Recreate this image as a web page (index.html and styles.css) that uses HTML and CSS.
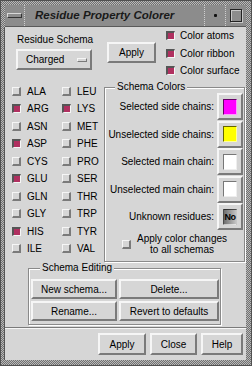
FILE: index.html
```html
<!DOCTYPE html>
<html lang="en">
<head>
    <meta charset="UTF-8">
    <title>Residue Property Colorer</title>
    <link rel="stylesheet" href="styles.css">
</head>
<body>
    <div class="window">
        <div class="titlebar">
            <div class="tb-menu"><span class="menu-bar"></span></div>
            <div class="tb-title">Residue Property Colorer</div>
            <div class="tb-min"><span class="min-dot"></span></div>
            <div class="tb-max"><span class="max-box"></span></div>
        </div>
        <div class="content">
            <div class="top">
                <div class="schema-col">
                    <div class="schema-label">Residue Schema</div>
                    <div class="option">Charged<span class="opt-ind"></span></div>
                </div>
                <button class="btn apply-top">Apply</button>
                <div class="toggles">
                    <div class="toggle"><span class="check on"></span>Color atoms</div>
                    <div class="toggle"><span class="check on"></span>Color ribbon</div>
                    <div class="toggle"><span class="check on"></span>Color surface</div>
                </div>
            </div>

            <div class="middle">
                <div class="residues">
                    <div class="residue"><span class="check"></span>ALA</div>
                    <div class="residue"><span class="check on"></span>ARG</div>
                    <div class="residue"><span class="check"></span>ASN</div>
                    <div class="residue"><span class="check on"></span>ASP</div>
                    <div class="residue"><span class="check"></span>CYS</div>
                    <div class="residue"><span class="check on"></span>GLU</div>
                    <div class="residue"><span class="check"></span>GLN</div>
                    <div class="residue"><span class="check"></span>GLY</div>
                    <div class="residue"><span class="check on"></span>HIS</div>
                    <div class="residue"><span class="check"></span>ILE</div>
                    <div class="residue"><span class="check"></span>LEU</div>
                    <div class="residue"><span class="check on"></span>LYS</div>
                    <div class="residue"><span class="check"></span>MET</div>
                    <div class="residue"><span class="check"></span>PHE</div>
                    <div class="residue"><span class="check"></span>PRO</div>
                    <div class="residue"><span class="check"></span>SER</div>
                    <div class="residue"><span class="check"></span>THR</div>
                    <div class="residue"><span class="check"></span>TRP</div>
                    <div class="residue"><span class="check"></span>TYR</div>
                    <div class="residue"><span class="check"></span>VAL</div>
                </div>

                <fieldset class="group colors">
                    <legend>Schema Colors</legend>
                    <div class="color-row">
                        <span class="color-label">Selected side chains:</span>
                        <span class="swatch-btn"><span class="swatch magenta"></span></span>
                    </div>
                    <div class="color-row">
                        <span class="color-label">Unselected side chains:</span>
                        <span class="swatch-btn"><span class="swatch yellow"></span></span>
                    </div>
                    <div class="color-row">
                        <span class="color-label">Selected main chain:</span>
                        <span class="swatch-btn"><span class="swatch white"></span></span>
                    </div>
                    <div class="color-row">
                        <span class="color-label">Unselected main chain:</span>
                        <span class="swatch-btn"><span class="swatch white"></span></span>
                    </div>
                    <div class="color-row">
                        <span class="color-label">Unknown residues:</span>
                        <span class="swatch-btn"><span class="swatch none">No</span></span>
                    </div>
                    <div class="apply-all">
                        <span class="check"></span>
                        <div class="apply-all-text">Apply color changes<br>to all schemas</div>
                    </div>
                </fieldset>
            </div>

            <fieldset class="group editing">
                <legend>Schema Editing</legend>
                <div class="edit-grid">
                    <button class="btn">New schema...</button>
                    <button class="btn">Delete...</button>
                    <button class="btn">Rename...</button>
                    <button class="btn">Revert to defaults</button>
                </div>
            </fieldset>

            <div class="separator"></div>

            <div class="actions">
                <button class="btn act-apply">Apply</button>
                <button class="btn act-close">Close</button>
                <button class="btn act-help">Help</button>
            </div>
        </div>
    </div>
</body>
</html>
```

FILE: styles.css
```css
body {
    margin: 0;
    font-family: "Liberation Sans", Arial, sans-serif;
    font-size: 10px;
    color: #000;
    background: #d6d6d6;
}

.window {
    width: 252px;
    height: 366px;
    box-sizing: border-box;
    border: 1px solid #505050;
    padding: 4px 5px 5px 4px;
    background: repeating-conic-gradient(#707070 0 25%, #b8b8b8 0 50%) 0 0 / 2px 2px;
    display: flex;
    flex-direction: column;
}

/* title bar */
.titlebar {
    height: 22px;
    display: flex;
    background: #8c8c8c;
    border-bottom: 1px solid #5a5a5a;
    box-sizing: border-box;
}

.tb-menu {
    width: 19px;
    display: flex;
    align-items: center;
    justify-content: center;
    border-right: 1px dotted #cfcfcf;
}

.menu-bar {
    width: 13px;
    height: 3px;
    border: 1px solid;
    border-color: #d8d8d8 #333 #333 #d8d8d8;
    background: #8c8c8c;
}

.tb-title {
    flex: 1;
    padding-left: 10px;
    font-size: 11.5px;
    font-weight: bold;
    font-style: italic;
    line-height: 21px;
    color: #1a1a1a;
    border-right: 1px dotted #cfcfcf;
}

.tb-min {
    width: 20px;
    display: flex;
    align-items: center;
    justify-content: center;
    border-right: 1px dotted #cfcfcf;
}

.min-dot {
    width: 3px;
    height: 3px;
    background: #111;
    border-radius: 1px;
}

.tb-max {
    width: 20px;
    display: flex;
    align-items: center;
    justify-content: center;
}

.max-box {
    width: 10px;
    height: 11px;
    border: 1px solid #222;
    box-shadow: inset 1px 1px 0 #c8c8c8, 1px 1px 0 #c8c8c8;
}

/* content */
.content {
    flex: 1;
    background: #d6d6d6;
    border-left: 1px solid #555;
    margin-left: -1px;
}

.btn {
    font-family: inherit;
    font-size: 10px;
    color: #000;
    background: #d6d6d6;
    border: 2px solid;
    border-color: #f6f6f6 #7a7a7a #7a7a7a #f6f6f6;
    padding: 0;
    box-sizing: border-box;
    cursor: pointer;
}

.check {
    display: inline-block;
    width: 9px;
    height: 9px;
    box-sizing: border-box;
    border-style: solid;
    border-width: 1px 2px 2px 1px;
    border-color: #f6f6f6 #7a7a7a #7a7a7a #f6f6f6;
    background: #d6d6d6;
    flex: none;
}

.check.on {
    border-width: 2px 1px 1px 2px;
    border-color: #555 #f6f6f6 #f6f6f6 #555;
    background: #b03060;
}

.top {
    height: 54px;
    display: flex;
    align-items: flex-start;
}

.schema-col {
    margin-left: 11px;
    margin-top: 7px;
    width: 76px;
}

.schema-label {
    line-height: 12px;
    padding-left: 1px;
    white-space: nowrap;
}

.option {
    margin-top: 3px;
    height: 21px;
    box-sizing: border-box;
    border: 2px solid;
    border-color: #f6f6f6 #7a7a7a #7a7a7a #f6f6f6;
    display: flex;
    align-items: center;
    justify-content: space-between;
    padding: 0 3px 0 8px;
}

.opt-ind {
    width: 10px;
    height: 4px;
    box-sizing: border-box;
    border: 1px solid;
    border-color: #f6f6f6 #7a7a7a #7a7a7a #f6f6f6;
}

.apply-top {
    margin-left: 15px;
    margin-top: 15px;
    width: 49px;
    height: 21px;
}

.toggles {
    margin-left: 10px;
}

.toggle {
    height: 17.5px;
    display: flex;
    align-items: center;
    gap: 5px;
}

/* residues and colors */
.middle {
    display: flex;
    align-items: flex-start;
}

.residues {
    margin-left: 7px;
    margin-top: 1.5px;
    width: 92px;
    display: grid;
    grid-auto-flow: column;
    grid-template-columns: 50px 42px;
    grid-template-rows: repeat(10, 17.5px);
}

.residue {
    display: flex;
    align-items: center;
    gap: 6px;
}

.group {
    margin: 0;
    padding: 0;
    min-width: 0;
    box-sizing: border-box;
    border: 1px solid #8a8a8a;
    box-shadow: 1px 1px 0 #fff, inset 1px 1px 0 #fff;
}

.group legend {
    padding: 0 2px;
    line-height: 12px;
    background: #d6d6d6;
}

.colors {
    width: 141px;
    padding: 0 1px 6px 0;
}

.colors legend {
    margin-left: 10px;
}

.color-row {
    height: 27.5px;
    display: flex;
    align-items: flex-start;
    justify-content: flex-end;
}

.color-label {
    margin-right: 3px;
    line-height: 27px;
    white-space: nowrap;
}

.swatch-btn {
    width: 26px;
    height: 27px;
    box-sizing: border-box;
    border: 2px solid;
    border-color: #f6f6f6 #7a7a7a #7a7a7a #f6f6f6;
    display: flex;
    align-items: center;
    justify-content: center;
}

.swatch {
    width: 14px;
    height: 16px;
    box-sizing: border-box;
    border: 1px solid;
    border-color: rgba(0, 0, 0, 0.6) rgba(255, 255, 255, 0.6) rgba(255, 255, 255, 0.6) rgba(0, 0, 0, 0.6);
}

.swatch.magenta {
    background: #ff00ff;
}

.swatch.yellow {
    background: #ffff00;
}

.swatch.white {
    background: #fff;
    border-color: #777 #eee #eee #777;
}

.swatch.none {
    background: linear-gradient(90deg, #6e6e6e, #c4c4c4);
    font-size: 9px;
    font-weight: bold;
    line-height: 14px;
    text-align: center;
    letter-spacing: -0.5px;
}

.apply-all {
    margin-top: 2.5px;
    margin-left: 17px;
    display: flex;
    align-items: center;
    gap: 6px;
}

.apply-all-text {
    text-align: center;
    line-height: 11px;
}

.editing {
    margin-left: 23px;
    width: 193px;
    padding: 5px 1px 3px 2px;
}

.editing legend {
    margin-left: 9px;
}

.edit-grid {
    display: grid;
    grid-template-columns: 86px 100px;
    grid-auto-rows: 20px;
    gap: 2px;
}

.separator {
    margin-top: 2px;
    height: 1px;
    background: #7a7a7a;
    border-bottom: 1px solid #f6f6f6;
}

.actions {
    margin-top: 4px;
    padding-right: 3px;
    display: flex;
    justify-content: flex-end;
    gap: 4px;
}

.actions .btn {
    height: 22px;
}

.act-apply {
    width: 48px;
}

.act-close {
    width: 47px;
}

.act-help {
    width: 42px;
}
```
